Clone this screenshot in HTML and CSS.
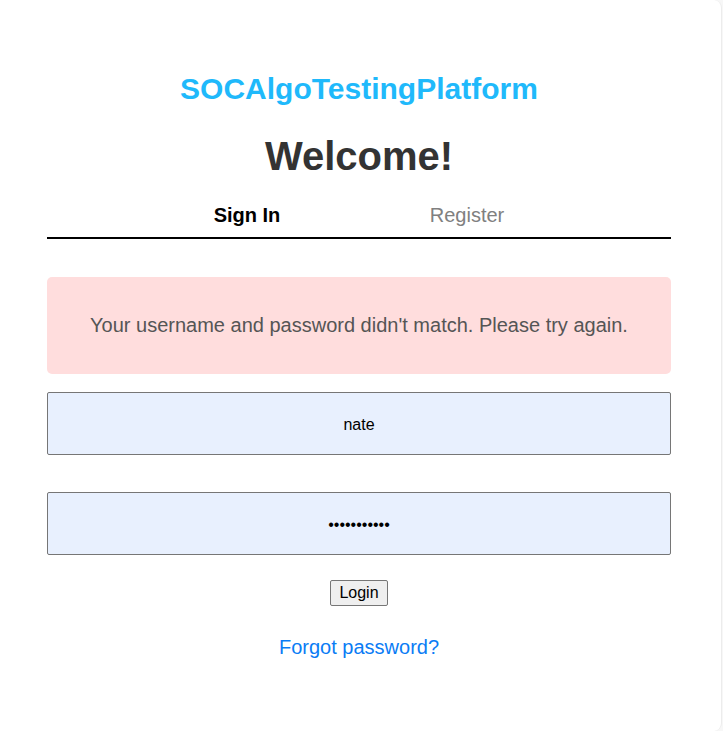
FILE: index.html
```html
<!DOCTYPE html>
<html>
<head>
<meta charset="utf-8">
<link rel="stylesheet" href="styles.css">
</head>
<body>
<div class="card">
  <h2 class="brand">SOCAlgoTestingPlatform</h2>
  <h1 class="welcome">Welcome!</h1>
  <div class="tabs">
    <div class="tab active">Sign In</div>
    <div class="tab">Register</div>
  </div>
  <div class="alert">Your username and password didn't match. Please try again.</div>
  <form class="form">
    <input class="field" type="text" value="nate">
    <input class="field" type="password" value="nate1234567">
    <button class="btn" type="button">Login</button>
  </form>
  <a class="forgot" href="#">Forgot password?</a>
</div>
</body>
</html>
```
FILE: styles.css
```css
html, body {
  margin: 0;
  padding: 0;
  background: #f7f7f7;
  height: 100%;
}
body {
  font-family: "Liberation Sans", Arial, sans-serif;
  overflow: hidden;
}
.card {
  box-sizing: border-box;
  width: 722px;
  height: 731px;
  background: #fff;
  border-right: 1px solid #ececec;
  border-radius: 0 8px 8px 0;
  padding: 71px 50px 0 47px;
  display: flex;
  flex-direction: column;
  align-items: stretch;
}
.brand {
  margin: 0;
  text-align: center;
  color: #1fb9fb;
  font-size: 30px;
  font-weight: bold;
  line-height: 36px;
}
.welcome {
  margin: 21px 0 0;
  text-align: center;
  color: #333;
  font-size: 40px;
  font-weight: bold;
  line-height: 56px;
}
.tabs {
  margin-top: 19px;
  display: flex;
  justify-content: center;
  border-bottom: 2px solid #000;
  padding: 0 4px 10px 0;
}
.tab {
  width: 220px;
  text-align: center;
  font-size: 20px;
  line-height: 24px;
  color: #808080;
}
.tab.active {
  color: #000;
  font-weight: bold;
}
.alert {
  margin-top: 38px;
  height: 97px;
  background: #ffdddd;
  border-radius: 5px;
  color: #555;
  font-size: 20px;
  display: flex;
  align-items: center;
  justify-content: center;
}
.form {
  margin: 18px 0 0;
  display: flex;
  flex-direction: column;
  align-items: center;
  gap: 37px;
}
.field {
  box-sizing: border-box;
  width: 100%;
  height: 63px;
  margin: 0;
  padding-top: 3px;
  border: 1px solid #767676;
  border-radius: 2px;
  background: #e8f0fe;
  text-align: center;
  font-family: "Liberation Sans", Arial, sans-serif;
  font-size: 16px;
  color: #000;
  outline: none;
}
.btn {
  margin-top: -12px;
  font-family: "Liberation Sans", Arial, sans-serif;
  font-size: 16px;
  padding: 1px 8px;
  height: 26px;
  background: #efefef;
  border: 1px solid #767676;
  border-radius: 2px;
  color: #000;
}
.forgot {
  margin-top: 30px;
  align-self: center;
  color: #0a7cf5;
  font-size: 20px;
  text-decoration: none;
}
```
